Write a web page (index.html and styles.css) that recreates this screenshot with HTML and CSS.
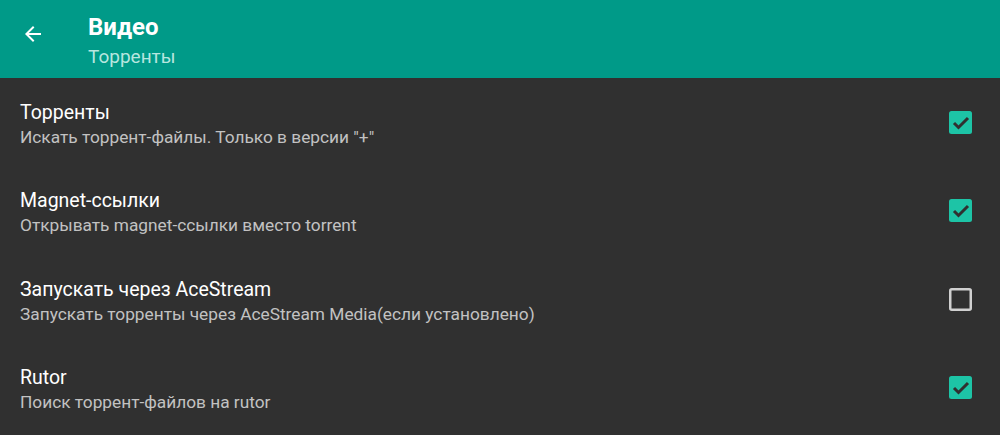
FILE: index.html
```html
<!DOCTYPE html>
<html lang="ru">
<head>
    <meta charset="UTF-8">
    <meta name="viewport" content="width=device-width, initial-scale=1.0">
    <title>Видео — Торренты</title>
    <link rel="stylesheet" href="styles.css">
</head>
<body>
    <div class="toolbar">
        <button class="back" aria-label="Назад">
            <svg width="24" height="24" viewBox="0 0 24 24">
                <path d="M20 11H7.83l5.59-5.59L12 4l-8 8 8 8 1.41-1.41L7.83 13H20v-2z" fill="#fff"/>
            </svg>
        </button>
        <div class="toolbar-titles">
            <div class="toolbar-title">Видео</div>
            <div class="toolbar-subtitle">Торренты</div>
        </div>
    </div>

    <div class="prefs">
        <div class="pref">
            <div class="pref-text">
                <div class="pref-title">Торренты</div>
                <div class="pref-summary">Искать торрент-файлы. Только в версии "+"</div>
            </div>
            <svg class="check checked" width="23" height="23" viewBox="0 0 23 23">
                <rect width="23" height="23" rx="2.5"/>
                <polyline points="5,12 9.5,16.5 19,7"/>
            </svg>
        </div>
        <div class="pref">
            <div class="pref-text">
                <div class="pref-title">Magnet-ссылки</div>
                <div class="pref-summary">Открывать magnet-ссылки вместо torrent</div>
            </div>
            <svg class="check checked" width="23" height="23" viewBox="0 0 23 23">
                <rect width="23" height="23" rx="2.5"/>
                <polyline points="5,12 9.5,16.5 19,7"/>
            </svg>
        </div>
        <div class="pref">
            <div class="pref-text">
                <div class="pref-title">Запускать через AceStream</div>
                <div class="pref-summary">Запускать торренты через AceStream Media(если установлено)</div>
            </div>
            <svg class="check" width="23" height="23" viewBox="0 0 23 23">
                <rect x="1.25" y="1.25" width="20.5" height="20.5" rx="1.5"/>
            </svg>
        </div>
        <div class="pref">
            <div class="pref-text">
                <div class="pref-title">Rutor</div>
                <div class="pref-summary">Поиск торрент-файлов на rutor</div>
            </div>
            <svg class="check checked" width="23" height="23" viewBox="0 0 23 23">
                <rect width="23" height="23" rx="2.5"/>
                <polyline points="5,12 9.5,16.5 19,7"/>
            </svg>
        </div>
    </div>
</body>
</html>
```

FILE: styles.css
```css
body {
    margin: 0;
    font-family: Roboto, "Noto Sans", sans-serif;
    background-color: #303030;
    height: 435px;
    overflow: hidden;
}
.toolbar {
    display: flex;
    align-items: flex-start;
    height: 78px;
    background-color: #009a88;
    box-sizing: border-box;
    padding-top: 11px;
}
.back {
    width: 88px;
    height: 24px;
    margin-top: 11px;
    border: none;
    background: none;
    padding: 0 0 0 21px;
    display: flex;
    align-items: center;
    cursor: pointer;
}
.toolbar-titles {
    display: flex;
    flex-direction: column;
}
.toolbar-title {
    color: #fff;
    font-size: 24px;
    font-weight: bold;
    line-height: 32px;
}
.toolbar-subtitle {
    color: #b7e6df;
    font-size: 19px;
    line-height: 28px;
}
.pref {
    display: flex;
    align-items: center;
    height: 88.5px;
    padding: 0 28px 0 20px;
}
.pref-text {
    flex: 1;
    padding-top: 5px;
}
.pref-title {
    color: #fff;
    font-size: 19.5px;
    line-height: 24px;
}
.pref-summary {
    color: #c2c2c2;
    font-size: 17.3px;
    line-height: 24px;
}
.check rect {
    fill: none;
    stroke: #d0d0d0;
    stroke-width: 2.5;
}
.check.checked rect {
    fill: #1dc4a6;
    stroke: none;
}
.check polyline {
    fill: none;
    stroke: #303030;
    stroke-width: 3;
}
```
